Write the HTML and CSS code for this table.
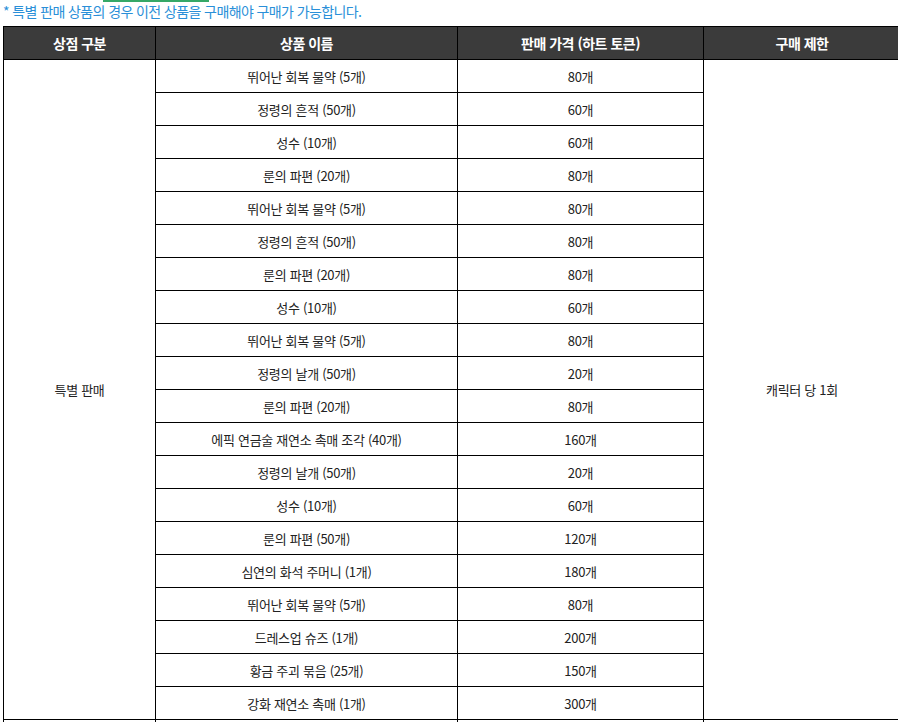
FILE: index.html
```html
<!DOCTYPE html>
<html lang="ko">
<head>
<meta charset="utf-8">
<link rel="stylesheet" href="styles.css">
</head>
<body>
<div class="page">
  <div class="tabline"></div>
  <p class="note">* 특별 판매 상품의 경우 이전 상품을 구매해야 구매가 가능합니다.</p>
  <div class="wrap">
    <table class="shop">
      <colgroup>
        <col class="c1"><col class="c2"><col class="c3"><col class="c4">
      </colgroup>
      <thead>
        <tr><th>상점 구분</th><th>상품 이름</th><th>판매 가격 (하트 토큰)</th><th>구매 제한</th></tr>
      </thead>
      <tbody>
        <tr><td rowspan="20">특별 판매</td><td>뛰어난 회복 물약 (5개)</td><td>80개</td><td rowspan="20">캐릭터 당 1회</td></tr>
        <tr><td>정령의 흔적 (50개)</td><td>60개</td></tr>
        <tr><td>성수 (10개)</td><td>60개</td></tr>
        <tr><td>룬의 파편 (20개)</td><td>80개</td></tr>
        <tr><td>뛰어난 회복 물약 (5개)</td><td>80개</td></tr>
        <tr><td>정령의 흔적 (50개)</td><td>80개</td></tr>
        <tr><td>룬의 파편 (20개)</td><td>80개</td></tr>
        <tr><td>성수 (10개)</td><td>60개</td></tr>
        <tr><td>뛰어난 회복 물약 (5개)</td><td>80개</td></tr>
        <tr><td>정령의 날개 (50개)</td><td>20개</td></tr>
        <tr><td>룬의 파편 (20개)</td><td>80개</td></tr>
        <tr><td>에픽 연금술 재연소 촉매 조각 (40개)</td><td>160개</td></tr>
        <tr><td>정령의 날개 (50개)</td><td>20개</td></tr>
        <tr><td>성수 (10개)</td><td>60개</td></tr>
        <tr><td>룬의 파편 (50개)</td><td>120개</td></tr>
        <tr><td>심연의 화석 주머니 (1개)</td><td>180개</td></tr>
        <tr><td>뛰어난 회복 물약 (5개)</td><td>80개</td></tr>
        <tr><td>드레스업 슈즈 (1개)</td><td>200개</td></tr>
        <tr><td>황금 주괴 묶음 (25개)</td><td>150개</td></tr>
        <tr><td>강화 재연소 촉매 (1개)</td><td>300개</td></tr>
        <tr class="next"><td></td><td></td><td></td><td></td></tr>
      </tbody>
    </table>
  </div>
</div>
</body>
</html>
```

FILE: styles.css
```css
html, body {
  margin: 0;
  padding: 0;
  background: #ffffff;
  overflow: hidden;
  height: 722px;
}
.page {
  position: relative;
  font-family: "Noto Sans CJK KR", "Noto Sans", sans-serif;
}
.tabline {
  position: absolute;
  left: 103px;
  top: 0;
  width: 106px;
  height: 2px;
  background: #36a867;
}
.note {
  margin: 0;
  padding: 2px 0 0 3px;
  height: 26px;
  box-sizing: border-box;
  font-size: 14px;
  line-height: 18px;
  letter-spacing: -0.6px;
  color: #2a8fd8;
}
.wrap {
  padding-left: 3px;
}
.shop {
  border-collapse: collapse;
  table-layout: fixed;
  width: 897px;
  color: #222222;
}
.c1 { width: 152px; }
.c2 { width: 302px; }
.c3 { width: 246px; }
.c4 { width: 197px; }
.shop th, .shop td {
  border: 1px solid #000000;
  padding: 0;
  text-align: center;
  vertical-align: middle;
  box-sizing: border-box;
}
.shop th {
  background: #3b3b3b;
  color: #ffffff;
  font-weight: 700;
  font-size: 14px;
  letter-spacing: -0.5px;
  height: 33px;
}
.shop td {
  font-size: 13px;
  letter-spacing: -0.3px;
  height: 33px;
}
```
